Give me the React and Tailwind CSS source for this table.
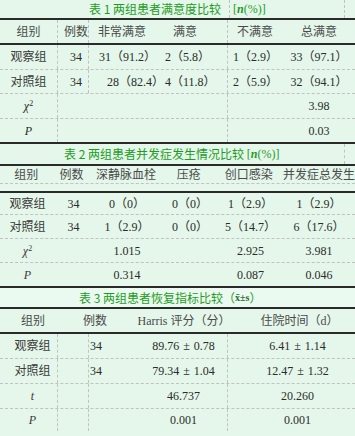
import React from 'react';

const Rule = () => <div className="h-[2px] bg-[#2a2a2a]" />;

const Chi = () => (
  <span>
    <i>χ</i>
    <sup className="text-[8px]">2</sup>
  </span>
);

const N = () => (
  <span className="font-['Liberation_Serif',serif]">
    [<b><i>n</i></b>(%)]
  </span>
);

// mean ± sd with the wide plus-minus of the source
const Pm = ({ a, b }) => (
  <span className="whitespace-nowrap">
    {a}
    <span className="mx-[4px]">±</span>
    {b}
  </span>
);

const Table1 = () => (
  <div>
    <div className="flex h-[18px] items-center text-[#1f9c24] font-['Noto_Sans_CJK_SC',sans-serif] text-[12px] leading-none">
      <div className="flex h-full w-[229px] items-center justify-end pr-[8px]">表 1 两组患者满意度比较</div>
      <div className="flex h-full w-[116px] items-center border-x border-dashed border-[#c2c2c2] pl-[3px]">
        <N />
      </div>
    </div>
    <Rule />
    <div className="flex h-[23px] text-[#4a4a4a]">
      <div className="flex w-[58px] items-center justify-center border-r border-dashed border-[#c2c2c2]">组别</div>
      <div className="flex w-[31px] items-center justify-center border-r border-dashed border-[#c2c2c2] pl-[6px]">例数</div>
      <div className="flex w-[71px] items-center justify-center pr-[5px]">非常满意</div>
      <div className="flex w-[68px] items-center border-r border-dashed border-[#c2c2c2] pl-[13px]">满意</div>
      <div className="flex w-[62px] items-center pl-[9px]">不满意</div>
      <div className="flex flex-1 items-center justify-center pr-[7px]">总满意</div>
    </div>
    <Rule />
    {[
      ['观察组', '34', '31（91.2）', 'pl-[10px]', '2（5.8）', '1（2.9）', '33（97.1）', 'h-[25px]'],
      ['对照组', '34', '28（82.4）', 'pl-[18px]', '4（11.8）', '2（5.9）', '32（94.1）', 'h-[24px]'],
    ].map((r) => (
      <div key={r[0]} className={`flex whitespace-nowrap border-b border-dashed border-[#c2c2c2] ${r[7]}`}>
        <div className="flex w-[58px] items-center justify-center border-r border-dashed border-[#c2c2c2] text-[#3a3a3a]">{r[0]}</div>
        <div className="flex w-[31px] items-center justify-center border-r border-dashed border-[#c2c2c2] pl-[6px]">{r[1]}</div>
        <div className={`flex w-[71px] items-center ${r[3]}`}>{r[2]}</div>
        <div className="flex w-[68px] items-center border-r border-dashed border-[#c2c2c2] pl-[5px]">{r[4]}</div>
        <div className="flex w-[62px] items-center pl-[5px]">{r[5]}</div>
        <div className="flex flex-1 items-center justify-center pr-[7px]">{r[6]}</div>
      </div>
    ))}
    <div className="flex h-[25px] border-b border-dashed border-[#c2c2c2]">
      <div className="flex w-[58px] items-center justify-center border-r border-dashed border-[#c2c2c2]"><Chi /></div>
      <div className="flex w-[170px] items-center border-r border-dashed border-[#c2c2c2]" />
      <div className="flex w-[62px] items-center" />
      <div className="flex flex-1 items-center justify-center pr-[7px]">3.98</div>
    </div>
    <div className="flex h-[23px]">
      <div className="flex w-[58px] items-center justify-center border-r border-dashed border-[#c2c2c2]"><i>P</i></div>
      <div className="flex w-[170px] items-center border-r border-dashed border-[#c2c2c2]" />
      <div className="flex w-[62px] items-center" />
      <div className="flex flex-1 items-center justify-center pr-[7px]">0.03</div>
    </div>
    <Rule />
  </div>
);

const t2cols = ['w-[55px]', 'w-[37px]', 'w-[70px]', 'w-[56px]', 'w-[65px]', 'flex-1'];

const Row2 = ({ cells, h, border }) => (
  <div className={`flex whitespace-nowrap ${h} ${border ? 'border-b border-dashed border-[#c2c2c2]' : ''}`}>
    {cells.map((c, i) => (
      <div key={i} className={`flex items-center justify-center ${t2cols[i]} ${i === 0 ? 'text-[#3a3a3a]' : ''}`}>{c}</div>
    ))}
  </div>
);

const Table2 = () => (
  <div>
    <div className="flex h-[20px] items-center text-[#1f9c24] font-['Noto_Sans_CJK_SC',sans-serif] text-[12px] leading-none">
      <div className="flex h-full w-[344px] items-center whitespace-nowrap pl-[64px]">
        表 2 两组患者并发症发生情况比较&nbsp;<N />
      </div>
      <div className="h-full flex-1 border-l border-dashed border-[#c2c2c2]" />
    </div>
    <Rule />
    <div className="flex h-[18px] whitespace-nowrap border-b border-dashed border-[#c2c2c2] text-[#4a4a4a]">
      <div className="flex w-[55px] items-center justify-center pr-[2px]">组别</div>
      <div className="flex w-[37px] items-center justify-center pr-[3px]">例数</div>
      <div className="flex w-[70px] items-center justify-center">深静脉血栓</div>
      <div className="flex w-[56px] items-center justify-center">压疮</div>
      <div className="flex w-[65px] items-center justify-center">创口感染</div>
      <div className="flex flex-1 items-center justify-center pl-[2px]">并发症总发生</div>
    </div>
    <div className="h-[7px]" />
    <Rule />
    <Row2 h="h-[22px]" border cells={['观察组', '34', '0（0）', '0（0）', '1（2.9）', '1（2.9）']} />
    <Row2 h="h-[24px]" border cells={['对照组', '34', '1（2.9）', '0（0）', '5（14.7）', '6（17.6）']} />
    <Row2 h="h-[24px]" border cells={[<Chi key="c" />, '', '1.015', '', '2.925', '3.981']} />
    <Row2 h="h-[23px]" cells={[<i key="p">P</i>, '', '0.314', '', '0.087', '0.046']} />
    <Rule />
  </div>
);

const Row3 = ({ a, b, c, d, h, border }) => (
  <div className={`flex whitespace-nowrap ${h} ${border ? 'border-b border-dashed border-[#c2c2c2]' : ''}`}>
    <div className="flex w-[58px] items-center justify-center border-r border-dashed border-[#c2c2c2] pl-[8px] text-[#3a3a3a]">{a}</div>
    <div className="w-[31px] border-r border-dashed border-[#c2c2c2]" />
    <div className="flex w-[139px] items-center border-r border-dashed border-[#c2c2c2]">
      <div className="w-[51px] pl-[1px]">{b}</div>
      <div className="flex flex-1 items-center justify-center">{c}</div>
    </div>
    <div className="flex flex-1 items-center justify-center pl-[12px]">{d}</div>
  </div>
);

const Table3 = () => (
  <div>
    <div className="flex h-[19px] items-center bg-[#ebfaf0] pl-[79px] text-[#1f9c24] font-['Noto_Sans_CJK_SC',sans-serif] text-[12px] leading-none">
      表 3 两组患者恢复指标比较（
      <span className="font-['Liberation_Serif',serif] text-[10px] font-bold text-[#2a6a2a]">x̄±s</span>）
    </div>
    <Rule />
    <div className="flex h-[23px] whitespace-nowrap text-[#4a4a4a]">
      <div className="flex w-[58px] items-center justify-center pl-[8px]">组别</div>
      <div className="flex w-[74px] items-center justify-center">例数</div>
      <div className="flex w-[104px] items-center justify-center">Harris 评分（分）</div>
      <div className="flex flex-1 items-center justify-center pl-[8px]">住院时间（d）</div>
    </div>
    <Rule />
    <Row3 h="h-[25px]" border a="观察组" b="34" c={<Pm a="89.76" b="0.78" />} d={<Pm a="6.41" b="1.14" />} />
    <Row3 h="h-[25px]" border a="对照组" b="34" c={<Pm a="79.34" b="1.04" />} d={<Pm a="12.47" b="1.32" />} />
    <Row3 h="h-[25px]" border a={<i>t</i>} b="" c="46.737" d="20.260" />
    <Row3 h="h-[22px]" a={<i>P</i>} b="" c="0.001" d="0.001" />
  </div>
);

export default function App() {
  return (
    <div className="h-[436px] w-[355px] overflow-hidden bg-[#e4f7ea] font-['Liberation_Serif','Noto_Sans_CJK_SC',serif] text-[12px] leading-none text-[#2b2b2b]">
      <Table1 />
      <Table2 />
      <Table3 />
    </div>
  );
}
